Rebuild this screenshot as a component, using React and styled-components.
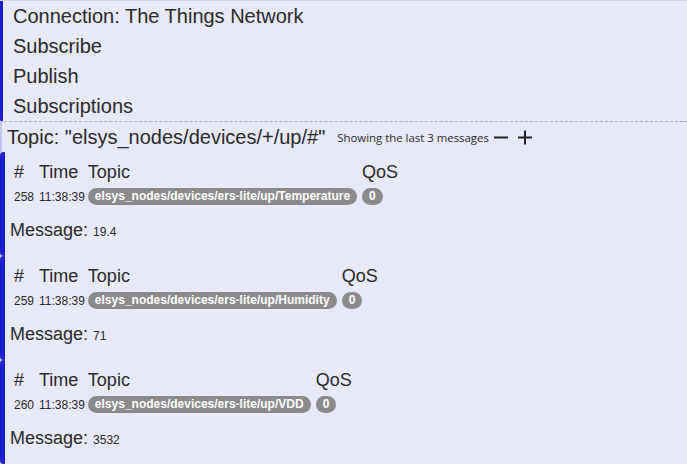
import React from "react";
import styled, { createGlobalStyle } from "styled-components";

const Global = createGlobalStyle`
  html, body { margin: 0; padding: 0; background: #e7e8f8; }
  body {
    font-family: "Liberation Sans", Arial, sans-serif;
    color: #2a2a2a;
    border-top: 1px solid #d6d6dc;
  }
`;

const BLUE = "#1a1fcc";

const Nav = styled.nav`
  border-left: 3px solid ${BLUE};
  border-bottom-left-radius: 3px;
  border-bottom: 1px dashed #a9abb8;
`;

const NavItem = styled.div`
  height: 30px;
  line-height: 30px;
  padding-left: 10px;
  font-size: 20px;
`;

const TopicSection = styled.section`
  border-left: 2px solid #c3c5ee;
`;

const TopicBar = styled.div`
  display: flex;
  align-items: center;
  height: 30px;
  padding-left: 5px;
`;

const TopicTitle = styled.span`
  font-size: 20px;
  margin-right: 12px;
`;

const Showing = styled.span`
  font-family: "Open Sans", "Liberation Sans", sans-serif;
  font-size: 11.4px;
  margin-right: 4px;
`;

const IconBtn = styled.button`
  border: 0;
  background: none;
  padding: 0;
  margin-right: 8px;
  width: 16px;
  height: 16px;
  display: flex;
  cursor: pointer;
`;

const Card = styled.article`
  margin-left: -2px;
  height: 104px;
  box-sizing: border-box;
  border-left: 5px solid ${BLUE};
  border-radius: 4px;
  padding-top: 9px;
  padding-left: 9px;
`;

const Table = styled.table`
  border-collapse: separate;
  border-spacing: 0;
`;

const Th = styled.th`
  font-weight: normal;
  font-size: 18px;
  text-align: left;
  padding: 0 ${(p) => p.$gap ?? 5}px 0 0;
  height: 22px;
  vertical-align: bottom;
`;

const Td = styled.td`
  font-size: 12px;
  padding: 5px ${(p) => p.$gap ?? 5}px 0 0;
  vertical-align: middle;
  white-space: nowrap;
`;

const Pill = styled.span`
  display: inline-block;
  background: #8b8b8b;
  color: #fff;
  font-weight: bold;
  font-size: 12px;
  border-radius: 9px;
  height: 17px;
  line-height: 17px;
  padding: 0 7px;
`;

const MessageLine = styled.div`
  margin-top: 15px;
  margin-left: -4px;
  font-size: 18px;
`;

const MessageValue = styled.span`
  font-size: 12px;
`;

const messages = [
  { n: 258, time: "11:38:39", topic: "elsys_nodes/devices/ers-lite/up/Temperature", qos: 0, msg: "19.4" },
  { n: 259, time: "11:38:39", topic: "elsys_nodes/devices/ers-lite/up/Humidity", qos: 0, msg: "71" },
  { n: 260, time: "11:38:39", topic: "elsys_nodes/devices/ers-lite/up/VDD", qos: 0, msg: "3532" },
];

const Minus = () => (
  <svg width="16" height="16" viewBox="0 0 16 16">
    <path d="M1 8.5H15" stroke="#222" strokeWidth="2" />
  </svg>
);
const Plus = () => (
  <svg width="16" height="16" viewBox="0 0 16 16">
    <path d="M1 8.5H15M8 1.5V15.5" stroke="#222" strokeWidth="2" />
  </svg>
);

export default function App() {
  return (
    <>
      <Global />
      <Nav>
        <NavItem>Connection: The Things Network</NavItem>
        <NavItem>Subscribe</NavItem>
        <NavItem>Publish</NavItem>
        <NavItem>Subscriptions</NavItem>
      </Nav>
      <TopicSection>
        <TopicBar>
          <TopicTitle>Topic: "elsys_nodes/devices/+/up/#"</TopicTitle>
          <Showing>Showing the last 3 messages</Showing>
          <IconBtn aria-label="less"><Minus /></IconBtn>
          <IconBtn aria-label="more"><Plus /></IconBtn>
        </TopicBar>
        {messages.map((m) => (
          <Card key={m.n}>
            <Table>
              <thead>
                <tr>
                  <Th>#</Th>
                  <Th $gap={3}>Time</Th>
                  <Th>Topic</Th>
                  <Th>QoS</Th>
                </tr>
              </thead>
              <tbody>
                <tr>
                  <Td>{m.n}</Td>
                  <Td $gap={3}>{m.time}</Td>
                  <Td><Pill>{m.topic}</Pill></Td>
                  <Td><Pill>{m.qos}</Pill></Td>
                </tr>
              </tbody>
            </Table>
            <MessageLine>
              Message: <MessageValue>{m.msg}</MessageValue>
            </MessageLine>
          </Card>
        ))}
      </TopicSection>
    </>
  );
}
